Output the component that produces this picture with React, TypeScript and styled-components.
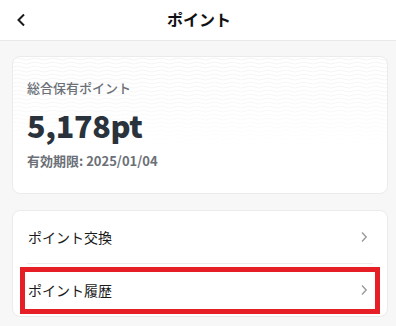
import React from "react";
import styled, { createGlobalStyle } from "styled-components";

const Global = createGlobalStyle`
  html, body { margin: 0; padding: 0; }
  body {
    background: #f7f7f7;
    font-family: "Noto Sans CJK JP", "Noto Sans", sans-serif;
    color: #222;
  }
`;

const Page = styled.div`
  width: 396px;
  min-height: 326px;
  background: #f7f7f7;
`;

const Header = styled.header`
  height: 40px;
  background: #fff;
  border-bottom: 1px solid #e9e9e9;
  display: grid;
  grid-template-columns: 44px 1fr 44px;
  align-items: center;
`;

const BackButton = styled.button`
  border: 0;
  background: none;
  padding: 0 0 0 16px;
  height: 40px;
  display: flex;
  align-items: center;
  cursor: pointer;
`;

const Title = styled.h1`
  margin: 0;
  font-size: 16px;
  font-weight: 700;
  text-align: center;
  color: #111;
  line-height: 1;
  padding-bottom: 3px;
  padding-left: 2px;
`;

const Main = styled.main`
  padding: 15px 8px 0 12px;
  display: flex;
  flex-direction: column;
  gap: 16px;
`;

const Card = styled.section`
  position: relative;
  background: #fff;
  border: 1px solid #ebebeb;
  border-radius: 8px;
  overflow: hidden;
`;

const SummaryCard = styled(Card)`
  height: 138px;
  box-sizing: border-box;
  padding: 21px 14px 0;
`;

const Waves = styled.svg`
  position: absolute;
  left: 0;
  top: 0;
  width: 100%;
  height: 90px;
  pointer-events: none;
`;

const SummaryBody = styled.div`
  position: relative;
  display: flex;
  flex-direction: column;
`;

const Label = styled.div`
  font-size: 13px;
  font-weight: 500;
  color: #6b7077;
  line-height: 20px;
`;

const Amount = styled.div`
  font-size: 30.5px;
  font-weight: 900;
  color: #2a323c;
  line-height: 38px;
  margin-top: 8px;
  letter-spacing: -0.3px;
`;

const Expiry = styled.div`
  font-size: 13px;
  font-weight: 700;
  color: #6b7077;
  line-height: 20px;
  margin-top: 7px;
`;

const Row = styled.a<{ $highlight?: boolean }>`
  position: relative;
  display: flex;
  align-items: center;
  justify-content: space-between;
  height: 52px;
  margin: 0 14px;
  font-size: 14px;
  font-weight: 400;
  color: #1a1a1a;
  text-decoration: none;
  & + & {
    border-top: 1px solid #ececec;
  }
  ${(p) =>
    p.$highlight &&
    `
    &::after {
      content: "";
      position: absolute;
      left: -7px;
      right: -7px;
      top: 3px;
      bottom: 2px;
      border: 5px solid #e61f26;
      pointer-events: none;
    }
  `}
`;

const RowText = styled.span`
  padding-left: 1px;
`;

const Chevron = () => (
  <svg width="8" height="12" viewBox="0 0 8 12" style={{ marginRight: 5 }}>
    <path d="M2 1.5 L6.2 6 L2 10.5" fill="none" stroke="#9a9a9a" strokeWidth="1.4" />
  </svg>
);

export default function App() {
  return (
    <Page>
      <Global />
      <Header>
        <BackButton aria-label="戻る">
          <svg width="10" height="14" viewBox="0 0 10 14">
            <path d="M8 1.5 L2.5 7 L8 12.5" fill="none" stroke="#1a1a1a" strokeWidth="2" />
          </svg>
        </BackButton>
        <Title>ポイント</Title>
        <span />
      </Header>
      <Main>
        <SummaryCard>
          <Waves preserveAspectRatio="none" viewBox="0 0 376 90">
            <defs>
              <pattern id="wave" width="18" height="4" patternUnits="userSpaceOnUse">
                <path d="M0 2 Q4.5 0 9 2 T18 2" fill="none" stroke="#f1f1f1" strokeWidth="0.8" />
              </pattern>
              <linearGradient id="fade" x1="0" y1="0" x2="0" y2="1">
                <stop offset="0" stopColor="#fff" stopOpacity="1" />
                <stop offset="0.55" stopColor="#fff" stopOpacity="0.7" />
                <stop offset="1" stopColor="#fff" stopOpacity="0" />
              </linearGradient>
              <mask id="m">
                <rect width="376" height="90" fill="url(#fade)" />
              </mask>
            </defs>
            <rect width="376" height="90" fill="url(#wave)" mask="url(#m)" />
          </Waves>
          <SummaryBody>
            <Label>総合保有ポイント</Label>
            <Amount>5,178pt</Amount>
            <Expiry>有効期限: 2025/01/04</Expiry>
          </SummaryBody>
        </SummaryCard>
        <Card>
          <Row href="#">
            <RowText>ポイント交換</RowText>
            <Chevron />
          </Row>
          <Row href="#" $highlight>
            <RowText>ポイント履歴</RowText>
            <Chevron />
          </Row>
        </Card>
      </Main>
    </Page>
  );
}
